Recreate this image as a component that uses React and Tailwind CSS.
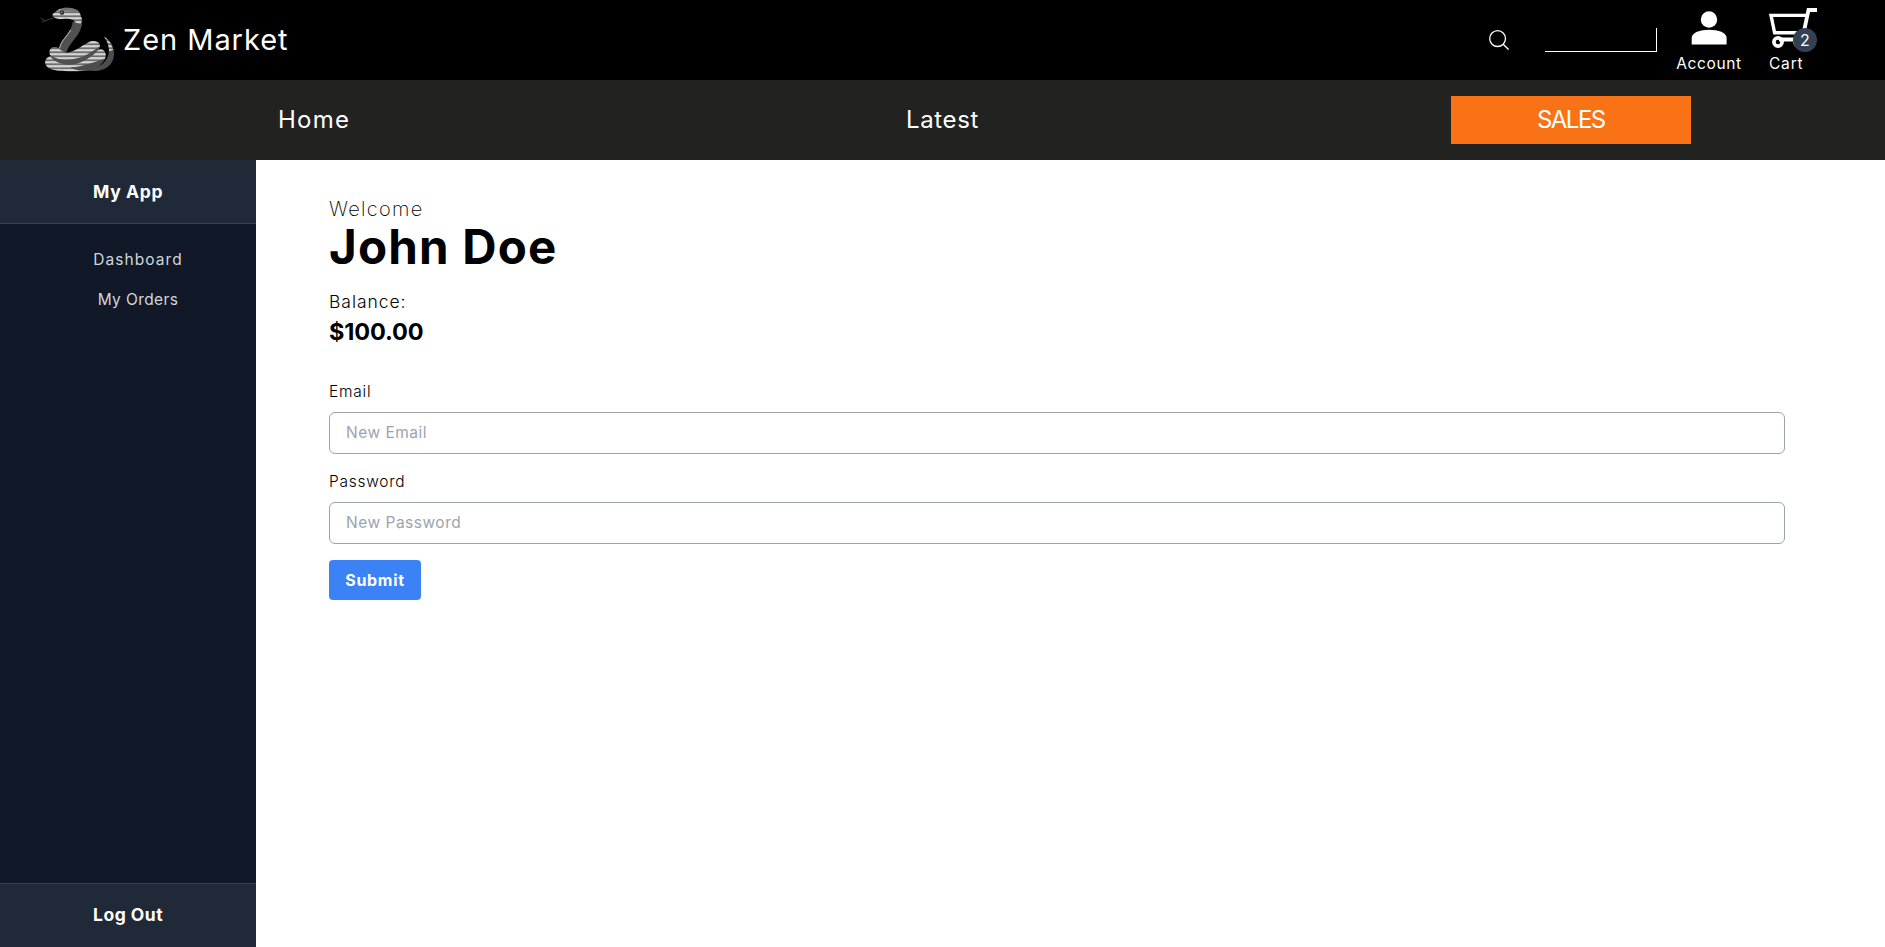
import React from "react";

function SnakeLogo() {
  return (
    <svg viewBox="0 0 300 240" className="h-20 w-[100px] shrink-0" aria-hidden="true">
      <defs>
        <pattern id="bands" width="300" height="12" patternUnits="userSpaceOnUse" y="2">
          <rect width="300" height="12" fill="#4b4b4b" />
          <rect width="300" height="7" y="1" fill="#e6e6e6" />
        </pattern>
      </defs>
      <path d="M70 54 C58 56 54 62 44 62 M44 62 L32 54 M44 62 L36 67" fill="none" stroke="#4a4a4a" strokeWidth="2.5" />
      <path d="M222 110 C242 118 254 142 252 166 C249 196 226 214 190 213 L172 206 C208 206 232 186 236 160 C238 138 234 122 222 110Z" fill="#4d4d4d" />
      <path d="M222 110 C236 118 246 134 249 150 L238 154 C236 136 232 122 222 110Z" fill="url(#bands)" />
      <path d="M48 178 C56 166 80 160 120 160 L214 148 C226 152 230 162 226 174 C218 190 204 196 190 206 C170 215 90 217 62 207 C46 201 42 188 48 178Z" fill="url(#bands)" />
      <path d="M122 202 C160 200 196 184 224 176 C216 192 204 202 190 211 C166 215 136 213 122 202Z" fill="#4d4d4d" />
      <path d="M62 146 C70 138 90 142 110 158 C136 156 162 132 182 124 C198 120 212 128 210 140 C198 158 162 182 132 188 C100 190 70 180 60 164 C57 157 58 150 62 146Z" fill="url(#bands)" />
      <path d="M60 166 C80 178 104 182 126 178 C160 174 188 154 210 138 C208 156 164 188 132 193 C104 198 66 186 60 166Z" fill="#505050" />
      <path d="M86 146 C90 120 128 92 128 66 L156 50 C160 74 150 98 134 116 C120 134 112 146 108 160Z" fill="#515151" />
      <path d="M89 145 C92 124 112 108 122 90" fill="none" stroke="#bdbdbd" strokeWidth="3" />
      <path d="M68 42 C76 38 82 28 96 25 C116 21 144 25 151 43 L155 58 L152 72 L138 68 C132 58 118 55 98 57 C84 59 72 54 68 49Z" fill="url(#bands)" />
      <path d="M82 34 C92 24 128 21 143 31 L149 40 C130 33 104 30 82 36Z" fill="#777777" />
      <circle cx="96" cy="38" r="6.5" fill="#2c2c2c" />
      <circle cx="95" cy="37" r="2.5" fill="#999999" />
    </svg>
  );
}

function SearchIcon() {
  return (
    <svg viewBox="0 0 20 20" className="h-5 w-5 shrink-0" fill="none" stroke="white" strokeWidth="1.3">
      <circle cx="8.6" cy="8.6" r="7.9" />
      <path d="M14.2 14.2 L19.6 19.6" />
    </svg>
  );
}

function PersonIcon() {
  return (
    <svg viewBox="0 0 36 34" className="h-[34px] w-9" fill="white">
      <circle cx="18" cy="8.5" r="8.2" />
      <path d="M.7 33.6 V27 C.7 21.5 9 18.7 18.2 18.7 C27.4 18.7 35.6 21.5 35.6 27 V33.6Z" />
    </svg>
  );
}

function CartIcon() {
  return (
    <svg viewBox="0 0 48 40" className="h-10 w-12" fill="none" stroke="white">
      <path d="M37 7.4 H2 L5.6 24.8 H34" strokeWidth="3.4" />
      <path d="M48 2 H39.5 L33.2 31.5 H10" strokeWidth="3.8" />
      <circle cx="9" cy="34" r="4.1" strokeWidth="3.6" />
      <circle cx="30" cy="34" r="4.1" strokeWidth="3.6" />
    </svg>
  );
}

function Header() {
  return (
    <header className="flex h-20 bg-black text-white">
      <div className="flex items-center pl-[30px]">
        <SnakeLogo />
        <span className="-ml-[7px] text-[29px] leading-10 tracking-[0.95px]">Zen Market</span>
      </div>
      <div className="ml-auto flex pr-[68px]">
        <div className="mr-9 flex h-20 items-center">
          <SearchIcon />
        </div>
        <input
          aria-label="Search"
          className="mt-7 mr-[19px] h-6 w-28 border-r border-b border-white bg-transparent outline-none"
        />
        <div className="mr-[27px] flex w-[66px] flex-col items-center pt-[11px]">
          <PersonIcon />
          <span className="mt-[7px] text-[15.5px] leading-6 tracking-[0.65px]">Account</span>
        </div>
        <div className="relative flex w-12 flex-col items-start pt-2">
          <CartIcon />
          <span className="mt-1 text-[15.5px] leading-6 tracking-[0.8px]">Cart</span>
          <span className="absolute top-7 right-0 flex h-6 w-6 items-center justify-center rounded-full bg-[#334155] text-base leading-6">
            2
          </span>
        </div>
      </div>
    </header>
  );
}

function NavBar() {
  return (
    <nav className="grid h-20 grid-cols-3 place-items-center bg-[#222220] text-2xl text-white">
      <a className="tracking-[1.3px]">Home</a>
      <a className="tracking-[0.6px]">Latest</a>
      <a className="flex h-12 w-60 items-center justify-center bg-[#f97316] tracking-[-1.5px]">SALES</a>
    </nav>
  );
}

function Sidebar() {
  return (
    <aside className="flex w-64 shrink-0 flex-col bg-[#111827]">
      <div className="flex h-16 items-center border-b border-[#374151] bg-[#1f2937] pt-px pl-[93px] text-[17.5px] font-bold tracking-[0.65px] text-white">
        My App
      </div>
      <ul className="flex grow flex-col items-center pt-6 pl-5 text-[15.5px] text-[#d1d5db]">
        <li className="mb-4 leading-6 tracking-[1.05px]">Dashboard</li>
        <li className="leading-6 tracking-[0.4px]">My Orders</li>
      </ul>
      <div className="flex h-16 items-center border-t border-[#374151] bg-[#1f2937] pl-[93px] text-[17.5px] font-bold tracking-[0.5px] text-white">
        Log Out
      </div>
    </aside>
  );
}

function Field({ label, placeholder, type }) {
  return (
    <div className="mb-4 flex flex-col">
      <label className="mb-2 text-[15.5px] leading-6 font-[350] tracking-[0.75px]">{label}</label>
      <input
        type={type}
        placeholder={placeholder}
        className="h-[42px] rounded-md border border-[#9ca3af] px-4 pb-0.5 text-[15.5px] tracking-[0.5px] outline-none placeholder:text-[#9ca3af]"
      />
    </div>
  );
}

function Account() {
  return (
    <main className="flex grow flex-col pt-[35px] pr-[100px] pl-[73px] text-black">
      <span className="text-xl leading-7 font-extralight tracking-[1.3px]">Welcome</span>
      <h1 className="text-[47.5px] leading-12 font-bold tracking-[1.2px]">John Doe</h1>
      <span className="mt-[17px] text-[17.5px] leading-7 font-light tracking-[0.95px]">Balance:</span>
      <span className="mb-8 text-[23.5px] leading-8 font-bold tracking-[-0.15px]">$100.00</span>
      <form className="flex flex-col">
        <Field label="Email" placeholder="New Email" type="email" />
        <Field label="Password" placeholder="New Password" type="password" />
        <button type="button" className="h-10 w-[92px] rounded bg-[#3b82f6] text-base font-bold tracking-[0.7px] text-white">
          Submit
        </button>
      </form>
    </main>
  );
}

export default function App() {
  return (
    <div className="flex h-screen flex-col overflow-hidden bg-white font-['Inter','Liberation_Sans',sans-serif]">
      <Header />
      <NavBar />
      <div className="flex grow">
        <Sidebar />
        <Account />
      </div>
    </div>
  );
}
